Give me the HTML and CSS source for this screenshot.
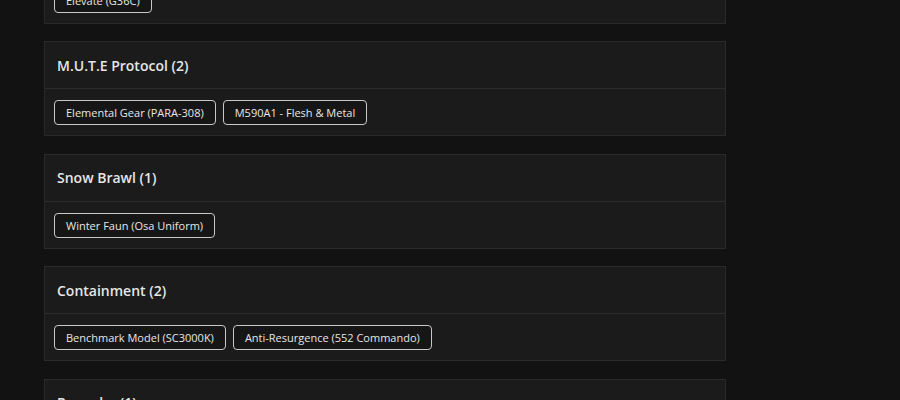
FILE: index.html
```html
<!DOCTYPE html>
<html lang="en">
<head>
<meta charset="UTF-8">
<meta name="viewport" content="width=device-width, initial-scale=1.0">
<title>Event Skins</title>
<link rel="stylesheet" href="styles.css">
</head>
<body>
<div class="events">
  <div class="event">
    <div class="event-title">Road to S.I. (1)</div>
    <div class="event-skins">
      <span class="skin">Elevate (G36C)</span>
    </div>
  </div>

  <div class="event">
    <div class="event-title">M.U.T.E Protocol (2)</div>
    <div class="event-skins">
      <span class="skin">Elemental Gear (PARA-308)</span>
      <span class="skin">M590A1 - Flesh &amp; Metal</span>
    </div>
  </div>

  <div class="event">
    <div class="event-title">Snow Brawl (1)</div>
    <div class="event-skins">
      <span class="skin">Winter Faun (Osa Uniform)</span>
    </div>
  </div>

  <div class="event">
    <div class="event-title">Containment (2)</div>
    <div class="event-skins">
      <span class="skin">Benchmark Model (SC3000K)</span>
      <span class="skin">Anti-Resurgence (552 Commando)</span>
    </div>
  </div>

  <div class="event">
    <div class="event-title">Rengoku (1)</div>
    <div class="event-skins">
      <span class="skin">Oni Mask (Hibana Headgear)</span>
    </div>
  </div>
</div>
</body>
</html>
```

FILE: styles.css
```css
body {
  font-family: "Open Sans", "Liberation Sans", sans-serif;
  margin: 0;
  background-color: #121212;
  color: #e4e4e4;
  overflow: hidden;
}
.events {
  display: flex;
  flex-direction: column;
  gap: 17.5px;
  width: 682px;
  margin: -71.5px 0 0 44px;
}
.event {
  background-color: #1b1b1b;
  border: 1px solid #2a2a2a;
}
.event-title {
  height: 46px;
  display: flex;
  align-items: center;
  padding: 0 12px;
  font-size: 14px;
  font-weight: 600;
  color: #e6e6e6;
  border-bottom: 1px solid #2c2c2c;
}
.event-skins {
  display: flex;
  flex-wrap: wrap;
  gap: 7px;
  padding: 11px 9px 10px;
}
.skin {
  box-sizing: border-box;
  height: 25px;
  display: flex;
  align-items: center;
  padding: 0 11px;
  font-size: 11px;
  color: #e6e6e6;
  background-color: #161616;
  border: 1px solid #c8c8c8;
  border-radius: 4px;
}
```
